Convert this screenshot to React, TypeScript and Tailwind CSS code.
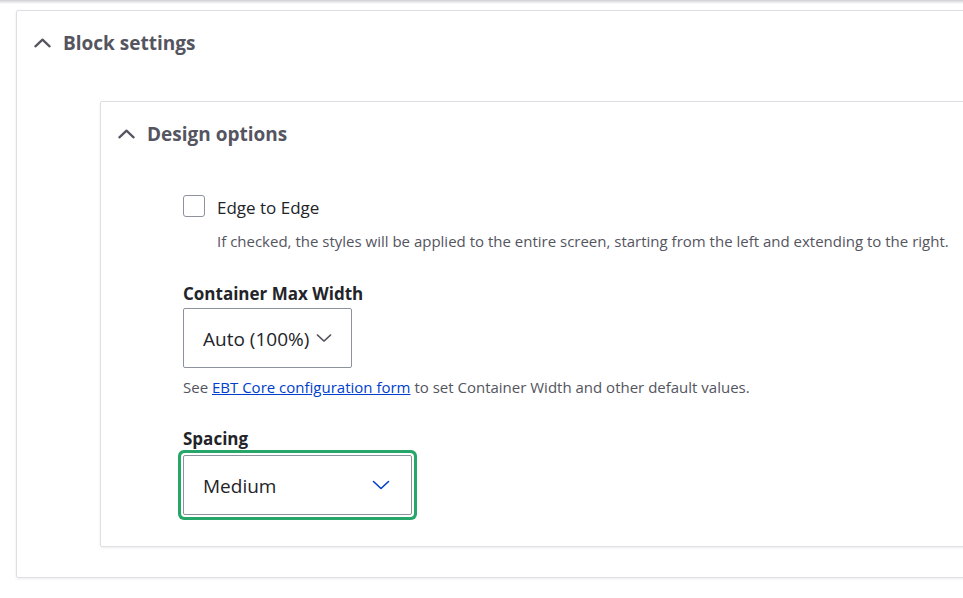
const font = { fontFamily: '"Open Sans", "Noto Sans", Arial, sans-serif' };

// Simple open chevron, drawn as a polyline so stroke weight can be tuned per use.
function Chevron({
  up = false,
  className,
  stroke = 2,
}: {
  up?: boolean;
  className?: string;
  stroke?: number;
}) {
  return (
    <svg viewBox="0 0 18 10" fill="none" className={className}>
      <polyline
        points={up ? "1.5,8.5 9,1.5 16.5,8.5" : "1.5,1.5 9,8.5 16.5,1.5"}
        stroke="currentColor"
        strokeWidth={stroke}
        strokeLinecap="round"
        strokeLinejoin="round"
      />
    </svg>
  );
}

function Select({
  value,
  width,
  active = false,
}: {
  value: string;
  width: string;
  active?: boolean;
}) {
  return (
    <div
      className={[
        "relative flex h-[60px] items-center rounded-[2px] border border-[#8e929c] bg-white pl-[19px] text-[19px] text-[#232429]",
        width,
        active ? "ring-[3px] ring-[#26a769] ring-offset-2" : "",
      ].join(" ")}
    >
      <span className="pt-[4px]">{value}</span>
      <Chevron
        className={[
          "absolute top-1/2 -translate-y-1/2",
          active
            ? "right-[21px] h-[10px] w-[18px] text-[#003ecc]"
            : "right-[19px] h-[9px] w-[16px] text-[#545560]",
        ].join(" ")}
        stroke={1.6}
      />
    </div>
  );
}

function Summary({ title }: { title: string }) {
  return (
    <div className="flex h-[64px] items-center gap-[12px] pl-[17px] text-[19px] font-bold text-[#545560]">
      <Chevron up className="h-[10px] w-[17px]" stroke={2.4} />
      <span>{title}</span>
    </div>
  );
}

export default function App() {
  return (
    <div className="h-[598px] w-[963px] overflow-hidden bg-white" style={font}>
      <div className="h-[4px] bg-gradient-to-b from-[#cfcfd3] to-white" />
      <div className="pl-[16px] pt-[6px]">
        <div className="-mr-[40px] rounded-[2px] border border-[#dedee5] pb-[30px] shadow-[0_1px_3px_rgba(0,0,0,0.08)]">
          <Summary title="Block settings" />
          <div className="ml-[83px] mt-[26px] rounded-[2px] border border-[#dedee5] pb-[31px] shadow-[0_1px_3px_rgba(0,0,0,0.08)]">
            <Summary title="Design options" />
            <div className="pl-[82px] pt-[26px]">
              <label className="flex items-center gap-[12px]">
                <span className="h-[22px] w-[22px] rounded-[3px] border border-[#8e929c] bg-white" />
                <span className="pt-[3px] text-[17px] text-[#232429]">Edge to Edge</span>
              </label>
              <p className="mt-[9px] pl-[34px] text-[15px] text-[#545560]">
                If checked, the styles will be applied to the entire screen, starting from the left and extending to the right.
              </p>

              <div className="mt-[29px] text-[17px] font-bold text-[#232429]">Container Max Width</div>
              <div className="mt-[1px]">
                <Select value="Auto (100%)" width="w-[169px]" />
              </div>
              <p className="mt-[8px] text-[15px] text-[#545560]">
                See{" "}
                <a href="#" className="text-[#003ecc] underline">
                  EBT Core configuration form
                </a>{" "}
                to set Container Width and other default values.
              </p>

              <div className="mt-[28px] text-[17px] font-bold text-[#232429]">Spacing</div>
              <div className="mt-[3px]">
                <Select value="Medium" width="w-[229px]" active />
              </div>
            </div>
          </div>
        </div>
      </div>
    </div>
  );
}
